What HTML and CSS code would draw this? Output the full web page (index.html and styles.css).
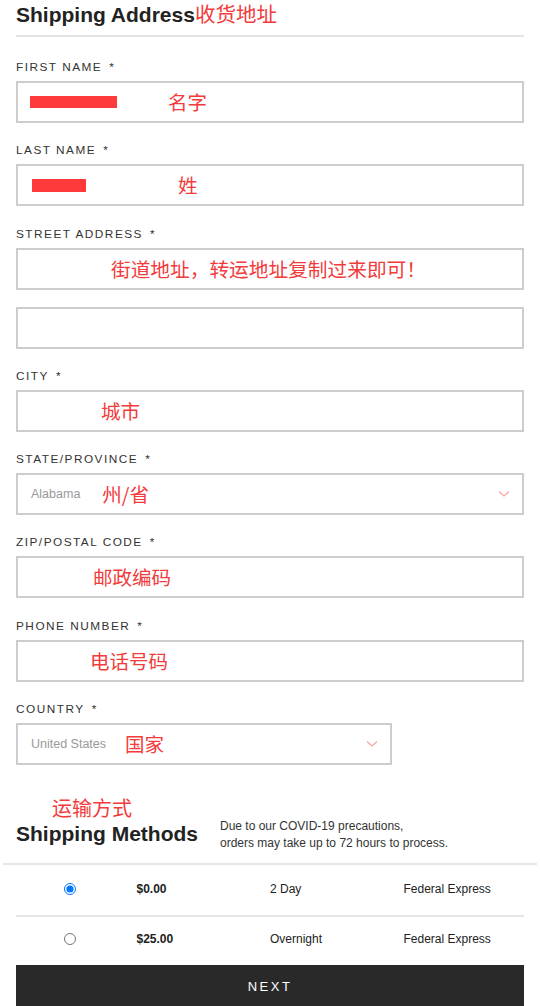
FILE: index.html
```html
<!DOCTYPE html>
<html lang="zh">
<head>
<meta charset="utf-8">
<title>Shipping Address</title>
<link rel="stylesheet" href="styles.css">
</head>
<body>
<div class="page">
  <h1 class="title">Shipping Address<span class="note-red title-red">收货地址</span></h1>

  <div class="fields">
    <div class="field">
      <div class="label">FIRST NAME<span class="star">*</span></div>
      <div class="input input-first"><span class="bar bar-first"></span><span class="note-red m-first">名字</span></div>
    </div>

    <div class="field">
      <div class="label">LAST NAME<span class="star">*</span></div>
      <div class="input input-last"><span class="bar bar-last"></span><span class="note-red m-last">姓</span></div>
    </div>

    <div class="field">
      <div class="label">STREET ADDRESS<span class="star">*</span></div>
      <div class="input pad-street"><span class="note-red street-red">街道地址，转运地址复制过来即可！</span></div>
      <div class="input input-extra"></div>
    </div>

    <div class="field">
      <div class="label">CITY<span class="star">*</span></div>
      <div class="input pad-city"><span class="note-red">城市</span></div>
    </div>

    <div class="field">
      <div class="label">STATE/PROVINCE<span class="star">*</span></div>
      <div class="input select">
        <span class="placeholder">Alabama</span><span class="note-red m-state">州/省</span>
        <svg class="chevron" width="12" height="8" viewBox="0 0 12 8"><polyline points="1,1.5 6,6 11,1.5" fill="none" stroke="#f3a3a3" stroke-width="1.2"/></svg>
      </div>
    </div>

    <div class="field">
      <div class="label">ZIP/POSTAL CODE<span class="star">*</span></div>
      <div class="input pad-zip"><span class="note-red">邮政编码</span></div>
    </div>

    <div class="field">
      <div class="label">PHONE NUMBER<span class="star">*</span></div>
      <div class="input pad-phone"><span class="note-red">电话号码</span></div>
    </div>

    <div class="field">
      <div class="label">COUNTRY<span class="star">*</span></div>
      <div class="input select select-country">
        <span class="placeholder">United States</span><span class="note-red m-country">国家</span>
        <svg class="chevron" width="12" height="8" viewBox="0 0 12 8"><polyline points="1,1.5 6,6 11,1.5" fill="none" stroke="#f3a3a3" stroke-width="1.2"/></svg>
      </div>
    </div>
  </div>

  <div class="methods-red note-red">运输方式</div>
  <div class="methods-head">
    <h2 class="methods-title">Shipping Methods</h2>
    <p class="methods-note">Due to our COVID-19 precautions,<br>orders may take up to 72 hours to process.</p>
  </div>

  <div class="methods">
    <div class="row row-first">
      <div class="cell cell-radio"><input type="radio" name="ship" checked></div>
      <div class="cell price">$0.00</div>
      <div class="cell">2 Day</div>
      <div class="cell">Federal Express</div>
    </div>
    <div class="row row-second">
      <div class="cell cell-radio"><input type="radio" name="ship"></div>
      <div class="cell price">$25.00</div>
      <div class="cell">Overnight</div>
      <div class="cell">Federal Express</div>
    </div>
  </div>

  <button class="next">NEXT</button>
</div>
</body>
</html>
```

FILE: styles.css
```css
* { box-sizing: border-box; }

html, body {
  margin: 0;
  padding: 0;
  background: #ffffff;
}

body {
  font-family: "Liberation Sans", Arial, sans-serif;
  color: #222222;
}

.page {
  padding: 0 16px;
}

.title {
  margin: 1px 0 0;
  font-size: 21px;
  line-height: 24px;
  font-weight: bold;
  color: #222222;
  padding-bottom: 8px;
  border-bottom: 2px solid #e4e4e4;
}

.note-red {
  font-family: "Noto Sans CJK SC", sans-serif;
  color: #f23b3b;
  font-weight: normal;
  font-size: 19.5px;
  line-height: 24px;
}

.title-red {
  font-size: 20.5px;
}

.street-red {
  font-size: 19.7px;
}

.fields {
  padding-top: 23px;
}

.field {
  margin-bottom: 20.3px;
}

.label {
  font-size: 11.8px;
  line-height: 14px;
  letter-spacing: 1.5px;
  color: #333333;
  margin-bottom: 7px;
}

.star {
  margin-left: 7px;
}

.input {
  height: 42px;
  border: 2px solid #cdcdcd;
  display: flex;
  align-items: center;
  position: relative;
}

.input-extra {
  margin-top: 17px;
}

.bar {
  display: block;
  background: #ff3a3a;
}

.input-first { padding-left: 12px; }
.bar-first { width: 87px; height: 12px; }
.m-first { margin-left: 51px; }

.input-last { padding-left: 14px; }
.bar-last { width: 54px; height: 13px; }
.m-last { margin-left: 92px; }

.pad-street { padding-left: 93px; }
.pad-city { padding-left: 83px; }
.pad-zip { padding-left: 75px; }
.pad-phone { padding-left: 72px; }

.select { padding-left: 13px; }

.placeholder {
  font-size: 12.5px;
  color: #999999;
}

.m-state { margin-left: 22px; }
.m-country { margin-left: 19px; }

.select-country {
  width: 376px;
}

.chevron {
  position: absolute;
  right: 12px;
  top: 15px;
}

.methods-red {
  margin-top: 31px;
  padding-left: 36px;
  font-size: 20px;
}

.methods-head {
  display: flex;
  align-items: center;
  gap: 22px;
  margin-top: -2px;
}

.methods-title {
  margin: 0;
  font-size: 21px;
  line-height: 24px;
  font-weight: bold;
  color: #222222;
}

.methods-note {
  margin: 0 0 -3px;
  font-size: 12px;
  line-height: 17px;
  color: #333333;
}

.methods {
  margin: 14px -13px 0;
  border-top: 2px solid #e6e6e6;
}

.row {
  display: grid;
  grid-template-columns: repeat(4, 1fr);
  align-items: center;
  font-size: 12px;
  color: #222222;
}

.row-first {
  height: 52px;
  padding-bottom: 4px;
  position: relative;
}

.row-first::after {
  content: "";
  position: absolute;
  left: 13px;
  right: 13px;
  bottom: 0;
  height: 2px;
  background: #e6e6e6;
}

.row-second {
  height: 48px;
  padding-bottom: 4px;
}

.cell-radio {
  display: flex;
  justify-content: center;
}

.cell-radio input {
  margin: 0;
  width: 12px;
  height: 12px;
}

.price {
  font-weight: bold;
}

.next {
  display: block;
  width: 100%;
  height: 42px;
  margin-top: 0;
  border: none;
  background: #292929;
  color: #ffffff;
  font-family: "Liberation Sans", Arial, sans-serif;
  font-size: 13px;
  letter-spacing: 2.5px;
}
```
